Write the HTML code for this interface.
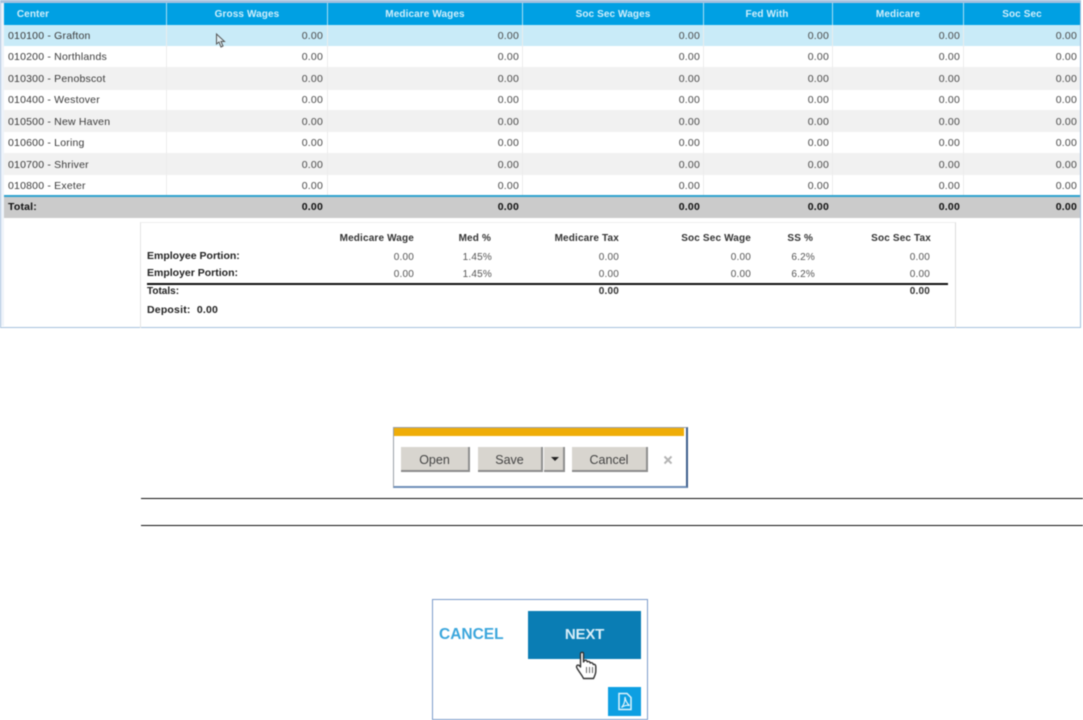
<!DOCTYPE html>
<html><head><meta charset="utf-8"><style>
html,body{margin:0;padding:0;background:#fff}
body{width:1083px;height:720px;position:relative;overflow:hidden;font-family:"Liberation Sans",sans-serif;}
#wrap{position:absolute;left:0;top:0;width:1083px;height:720px;filter:blur(.4px)}
.a{position:absolute}
.bg{position:absolute;left:4px;width:1076px}
.v{position:absolute;width:60px;text-align:right;font-size:10.5px;line-height:14px;color:#4a4a4a;letter-spacing:.2px;margin-top:1px}
.l{position:absolute;left:8px;font-size:10.5px;line-height:14px;color:#3a3a3a;letter-spacing:.2px;white-space:nowrap;margin-top:1px}
.h{position:absolute;top:8px;width:160px;text-align:center;font-size:10px;line-height:14px;color:#cfeefb;font-weight:bold;letter-spacing:.1px}
.cl{position:absolute;top:25px;height:170px;width:1px;background:#ececec}
.hl{position:absolute;top:3px;height:22px;width:1px;background:#a8def5}
.t{position:absolute;width:100px;text-align:right;font-size:10.5px;line-height:14px;color:#111;font-weight:bold;letter-spacing:.2px;margin-top:1px}
.p{position:absolute;width:110px;text-align:right;font-size:10px;line-height:12px;color:#333;font-weight:bold;letter-spacing:.15px;white-space:nowrap;margin-top:1px}
.q{position:absolute;width:70px;text-align:right;font-size:10px;line-height:12px;color:#555;letter-spacing:.2px;margin-top:1px}
.b{position:absolute;left:147px;font-size:10.5px;line-height:12px;color:#222;font-weight:bold;white-space:nowrap;margin-top:1px}
.btn{position:absolute;top:447px;height:25px;background:#d8d5cf;border-right:2px solid #8f8f8f;border-bottom:2px solid #8b8b8b;box-sizing:border-box;text-align:center;font-size:12.5px;line-height:27px;color:#444}
</style></head><body><div id="wrap">
<div class="a" style="left:0;top:0;width:1079px;height:324px;border:1px solid #a6c1de;border-top:3px solid #a6c1de"></div>
<div class="a" style="left:1px;top:3px;width:3px;height:323px;background:#eef3f9"></div>
<div class="bg" style="top:3px;height:22px;background:#00a0e3"></div>
<div class="bg" style="top:25px;height:21px;background:#c9ebf8"></div>
<div class="bg" style="top:67px;height:23px;background:#f1f1f1"></div>
<div class="bg" style="top:110px;height:22px;background:#f1f1f1"></div>
<div class="bg" style="top:153px;height:22px;background:#f1f1f1"></div>
<div class="bg" style="top:195px;height:2px;background:#2fa3cf"></div>
<div class="bg" style="top:197px;height:21px;background:#cbcbcb"></div>

<div class="hl" style="left:166px"></div><div class="hl" style="left:327px"></div><div class="hl" style="left:522px"></div><div class="hl" style="left:703px"></div><div class="hl" style="left:832px"></div><div class="hl" style="left:963px"></div>
<div class="cl" style="left:166px"></div><div class="cl" style="left:327px"></div><div class="cl" style="left:522px"></div><div class="cl" style="left:703px"></div><div class="cl" style="left:832px"></div><div class="cl" style="left:963px"></div>

<div class="h" style="left:-47px">Center</div>
<div class="h" style="left:167px">Gross Wages</div>
<div class="h" style="left:345px">Medicare Wages</div>
<div class="h" style="left:533px">Soc Sec Wages</div>
<div class="h" style="left:687px">Fed With</div>
<div class="h" style="left:818px">Medicare</div>
<div class="h" style="left:942px">Soc Sec</div>

<div class="l" style="top:28px">010100 - Grafton</div>
<div class="v" style="left:263px;top:28px">0.00</div><div class="v" style="left:459px;top:28px">0.00</div><div class="v" style="left:640px;top:28px">0.00</div><div class="v" style="left:769px;top:28px">0.00</div><div class="v" style="left:900px;top:28px">0.00</div><div class="v" style="left:1017px;top:28px">0.00</div>
<div class="l" style="top:49px">010200 - Northlands</div>
<div class="v" style="left:263px;top:49px">0.00</div><div class="v" style="left:459px;top:49px">0.00</div><div class="v" style="left:640px;top:49px">0.00</div><div class="v" style="left:769px;top:49px">0.00</div><div class="v" style="left:900px;top:49px">0.00</div><div class="v" style="left:1017px;top:49px">0.00</div>
<div class="l" style="top:71px">010300 - Penobscot</div>
<div class="v" style="left:263px;top:71px">0.00</div><div class="v" style="left:459px;top:71px">0.00</div><div class="v" style="left:640px;top:71px">0.00</div><div class="v" style="left:769px;top:71px">0.00</div><div class="v" style="left:900px;top:71px">0.00</div><div class="v" style="left:1017px;top:71px">0.00</div>
<div class="l" style="top:92px">010400 - Westover</div>
<div class="v" style="left:263px;top:92px">0.00</div><div class="v" style="left:459px;top:92px">0.00</div><div class="v" style="left:640px;top:92px">0.00</div><div class="v" style="left:769px;top:92px">0.00</div><div class="v" style="left:900px;top:92px">0.00</div><div class="v" style="left:1017px;top:92px">0.00</div>
<div class="l" style="top:114px">010500 - New Haven</div>
<div class="v" style="left:263px;top:114px">0.00</div><div class="v" style="left:459px;top:114px">0.00</div><div class="v" style="left:640px;top:114px">0.00</div><div class="v" style="left:769px;top:114px">0.00</div><div class="v" style="left:900px;top:114px">0.00</div><div class="v" style="left:1017px;top:114px">0.00</div>
<div class="l" style="top:135px">010600 - Loring</div>
<div class="v" style="left:263px;top:135px">0.00</div><div class="v" style="left:459px;top:135px">0.00</div><div class="v" style="left:640px;top:135px">0.00</div><div class="v" style="left:769px;top:135px">0.00</div><div class="v" style="left:900px;top:135px">0.00</div><div class="v" style="left:1017px;top:135px">0.00</div>
<div class="l" style="top:157px">010700 - Shriver</div>
<div class="v" style="left:263px;top:157px">0.00</div><div class="v" style="left:459px;top:157px">0.00</div><div class="v" style="left:640px;top:157px">0.00</div><div class="v" style="left:769px;top:157px">0.00</div><div class="v" style="left:900px;top:157px">0.00</div><div class="v" style="left:1017px;top:157px">0.00</div>
<div class="l" style="top:178px">010800 - Exeter</div>
<div class="v" style="left:263px;top:178px">0.00</div><div class="v" style="left:459px;top:178px">0.00</div><div class="v" style="left:640px;top:178px">0.00</div><div class="v" style="left:769px;top:178px">0.00</div><div class="v" style="left:900px;top:178px">0.00</div><div class="v" style="left:1017px;top:178px">0.00</div>

<div class="t" style="left:-92px;top:199px;width:129px">Total:</div>
<div class="t" style="left:223px;top:199px">0.00</div><div class="t" style="left:419px;top:199px">0.00</div><div class="t" style="left:600px;top:199px">0.00</div><div class="t" style="left:729px;top:199px">0.00</div><div class="t" style="left:860px;top:199px">0.00</div><div class="t" style="left:977px;top:199px">0.00</div>

<svg class="a" style="left:214px;top:33px" width="14" height="17" viewBox="0 0 14 17"><path d="M2.5 1 L2.5 11 L5 9 L7 14 L9 13 L7 8.5 L10.5 8.5 Z" fill="#dfeef4" stroke="#555" stroke-width="1"/></svg>

<div class="a" style="left:140px;top:222px;width:814px;height:105px;border-left:1px solid #e4e4e4;border-right:1px solid #dcdcdc;border-top:1px solid #eee"></div>
<div class="p" style="left:304px;top:232px">Medicare Wage</div>
<div class="p" style="left:381px;top:232px">Med %</div>
<div class="p" style="left:509px;top:232px">Medicare Tax</div>
<div class="p" style="left:641px;top:232px">Soc Sec Wage</div>
<div class="p" style="left:703px;top:232px">SS %</div>
<div class="p" style="left:821px;top:232px">Soc Sec Tax</div>
<div class="b" style="top:249px">Employee Portion:</div>
<div class="b" style="top:266px">Employer Portion:</div>
<div class="q" style="left:344px;top:251px">0.00</div><div class="q" style="left:422px;top:251px">1.45%</div><div class="q" style="left:549px;top:251px">0.00</div><div class="q" style="left:681px;top:251px">0.00</div><div class="q" style="left:745px;top:251px">6.2%</div><div class="q" style="left:860px;top:251px">0.00</div>
<div class="q" style="left:344px;top:268px">0.00</div><div class="q" style="left:422px;top:268px">1.45%</div><div class="q" style="left:549px;top:268px">0.00</div><div class="q" style="left:681px;top:268px">0.00</div><div class="q" style="left:745px;top:268px">6.2%</div><div class="q" style="left:860px;top:268px">0.00</div>
<div class="a" style="left:147px;top:283px;width:801px;height:2px;background:#111"></div>
<div class="b" style="top:285px;font-size:10px">Totals:</div>
<div class="q" style="left:549px;top:285px;font-weight:bold;color:#333">0.00</div>
<div class="q" style="left:860px;top:285px;font-weight:bold;color:#333">0.00</div>
<div class="b" style="top:303px;font-size:10.5px;letter-spacing:.2px">Deposit:&nbsp; 0.00</div>

<div class="a" style="left:393px;top:427px;width:292px;height:58px;background:#fff;border:1px solid #9aa0a8;border-right:2px solid #3e5f8c;border-bottom:2px solid #6f8fb8"></div>
<div class="a" style="left:394px;top:428px;width:290px;height:8px;background:#efad07"></div>
<div class="btn" style="left:401px;width:69px">Open</div>
<div class="btn" style="left:478px;width:65px">Save</div>
<div class="btn" style="left:544px;width:21px"></div>
<svg class="a" style="left:550px;top:456px" width="10" height="6"><path d="M1 1H9L5 5Z" fill="#222"/></svg>
<div class="btn" style="left:572px;width:76px">Cancel</div>
<svg class="a" style="left:663px;top:455px" width="10" height="10"><path d="M1.5 1.5L8.5 8.5M8.5 1.5L1.5 8.5" stroke="#b5b5b5" stroke-width="2"/></svg>

<div class="a" style="left:141px;top:498px;width:942px;height:1px;background:#111"></div>
<div class="a" style="left:141px;top:525px;width:942px;height:1px;background:#111"></div>

<div class="a" style="left:432px;top:599px;width:214px;height:119px;background:#fff;border:1px solid #7c9ccb"></div>
<div class="a" style="left:439px;top:626px;font-size:15.5px;line-height:17px;font-weight:bold;color:#3ba6dc;letter-spacing:0">CANCEL</div>
<div class="a" style="left:528px;top:611px;width:113px;height:48px;background:#0a7db4;color:#d8eef8;text-align:center;font-size:15px;line-height:48px;font-weight:bold;letter-spacing:-.2px">NEXT</div>
<svg class="a" style="left:573px;top:651px" width="26" height="30" viewBox="0 0 26 30"><path d="M7.5 2.5C7.5 1 10.5 1 10.5 2.5V11L11.5 9.5C13 8.8 14 9.5 14.2 10.8C15.5 10 17 10.5 17.2 12C18.5 11.3 20 12 20.3 13.5C21.8 13 22.8 14 22.8 15.5V20C22.8 23 21.5 25 20.5 27.5H10.5C9.5 25 7 22 4.5 18C3.5 16.5 3 15.5 4 14.5C5 13.5 6.5 14.5 7.5 16Z" fill="#fff" stroke="#333" stroke-width="1.4" stroke-linejoin="round"/><path d="M13.5 16V22M16.5 16V22M19.5 16V22" stroke="#666" stroke-width="1"/></svg>
<div class="a" style="left:608px;top:687px;width:33px;height:29px;background:#0d9fe2"></div>
<svg class="a" style="left:617px;top:692px" width="16" height="19" viewBox="0 0 16 19"><path d="M2 1.5H10L14 5.5V17.5H2Z" fill="none" stroke="#dff3fc" stroke-width="1.5"/><path d="M8 5C8 9 7 13 4.5 15.5C7 13.5 10 13 12.5 13.5C10 11.5 8.5 8.5 8 5Z" fill="none" stroke="#dff3fc" stroke-width="1.2"/></svg>
</div></body></html>
